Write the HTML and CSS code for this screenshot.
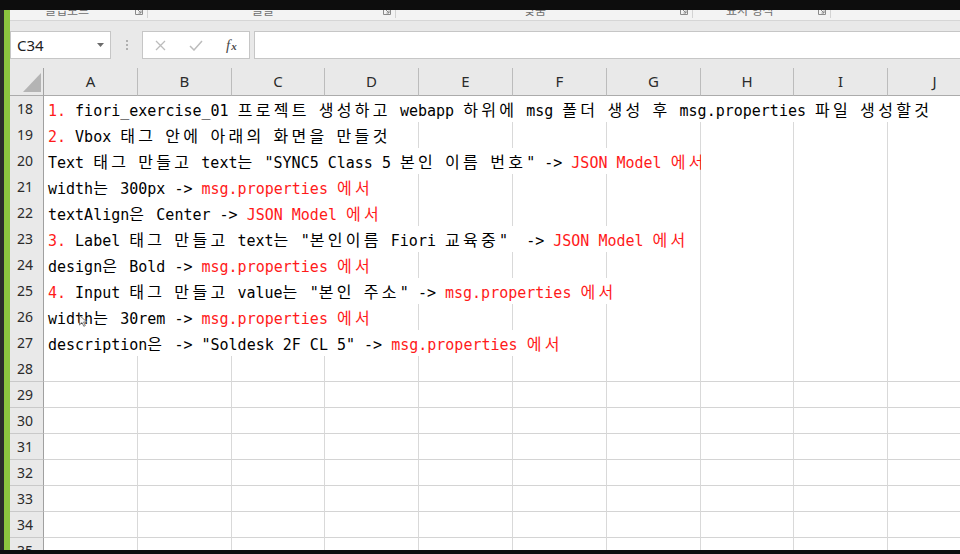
FILE: index.html
```html
<!DOCTYPE html>
<html lang="ko">
<head>
<meta charset="utf-8">
<title>Excel</title>
<link rel="stylesheet" href="styles.css">
</head>
<body>
<div class="screen">
  <div class="topbar"></div>
  <div class="main">
    <div class="edge"></div>
    <div class="accent"></div>
    <div class="app">
      <div class="ribbon">
        <div class="grp g1"><span class="glabel">클립보드</span><svg class="launch" viewBox="0 0 8 8"><path d="M0.5 0.5V7.5H7.5V0.5" fill="none" stroke="#8a8a8a"/><path d="M3 3L6 6M6 3.5V6H3.5" fill="none" stroke="#8a8a8a"/></svg></div>
        <div class="grp g2"><span class="glabel">글꼴</span><svg class="launch" viewBox="0 0 8 8"><path d="M0.5 0.5V7.5H7.5V0.5" fill="none" stroke="#8a8a8a"/><path d="M3 3L6 6M6 3.5V6H3.5" fill="none" stroke="#8a8a8a"/></svg></div>
        <div class="grp g3"><span class="glabel">맞춤</span><svg class="launch" viewBox="0 0 8 8"><path d="M0.5 0.5V7.5H7.5V0.5" fill="none" stroke="#8a8a8a"/><path d="M3 3L6 6M6 3.5V6H3.5" fill="none" stroke="#8a8a8a"/></svg></div>
        <div class="grp g4"><span class="glabel">표시 형식</span><svg class="launch" viewBox="0 0 8 8"><path d="M0.5 0.5V7.5H7.5V0.5" fill="none" stroke="#8a8a8a"/><path d="M3 3L6 6M6 3.5V6H3.5" fill="none" stroke="#8a8a8a"/></svg></div>
      </div>

      <div class="fbar">
        <div class="namebox"><span class="nbtext">C34</span><svg class="caret" viewBox="0 0 7 4"><path d="M0 0H7L3.5 4Z" fill="#6b6b6b"/></svg></div>
        <div class="dots"><i></i><i></i><i></i></div>
        <div class="fbtns">
          <span class="slot"><svg width="11" height="11" viewBox="0 0 11 11"><path d="M1 1L10 10M10 1L1 10" stroke="#bcbcbc" stroke-width="1.3" fill="none"/></svg></span>
          <span class="slot"><svg width="14" height="11" viewBox="0 0 14 11"><path d="M1 6L5 10L13 1" stroke="#bcbcbc" stroke-width="1.5" fill="none"/></svg></span>
          <span class="slot fx"><i>f</i><i class="fxx">x</i></span>
        </div>
        <div class="finput"></div>
      </div>

      <div class="sheet">
        <div class="row head">
          <div class="corner"><svg width="18" height="19" viewBox="0 0 18 19"><path d="M18 0V19H0Z" fill="#b4b4b4"/></svg></div>
          <div class="ch">A</div><div class="ch">B</div><div class="ch">C</div><div class="ch">D</div><div class="ch">E</div><div class="ch">F</div><div class="ch">G</div><div class="ch">H</div><div class="ch">I</div><div class="ch">J</div>
        </div>

        <div class="row"><div class="rh">18</div><div class="c t span10"><span class="r">1.</span> fiori_exercise_01 <span class="k">프로젝트</span> <span class="k">생성하고</span> webapp <span class="k">하위에</span> msg <span class="k">폴더</span> <span class="k">생성</span> <span class="k">후</span> msg.properties <span class="k">파일</span> <span class="k">생성할것</span></div></div>

        <div class="row"><div class="rh">19</div><div class="c t span4"><span class="r">2.</span> Vbox <span class="k">태그</span> <span class="k">안에</span> <span class="k">아래의</span> <span class="k">화면을</span> <span class="k">만들것</span></div><div class="c"></div><div class="c"></div><div class="c"></div><div class="c"></div><div class="c"></div><div class="c"></div></div>

        <div class="row"><div class="rh">20</div><div class="c t span7">Text <span class="k">태그</span> <span class="k">만들고</span> text<span class="k">는</span> "SYNC5 Class 5 <span class="k">본인</span> <span class="k">이름</span> <span class="k">번호</span>" -&gt; <span class="r">JSON Model <span class="k">에서</span></span></div><div class="c"></div><div class="c"></div><div class="c"></div></div>

        <div class="row"><div class="rh">21</div><div class="c t span4">width<span class="k">는</span> 300px -&gt; <span class="r">msg.properties <span class="k">에서</span></span></div><div class="c"></div><div class="c"></div><div class="c"></div><div class="c"></div><div class="c"></div><div class="c"></div></div>

        <div class="row"><div class="rh">22</div><div class="c t span4">textAlign<span class="k">은</span> Center -&gt; <span class="r">JSON Model <span class="k">에서</span></span></div><div class="c"></div><div class="c"></div><div class="c"></div><div class="c"></div><div class="c"></div><div class="c"></div></div>

        <div class="row"><div class="rh">23</div><div class="c t span7"><span class="r">3.</span> Label <span class="k">태그</span> <span class="k">만들고</span> text<span class="k">는</span> "<span class="k">본인이름</span> Fiori <span class="k">교육중</span>"  -&gt; <span class="r">JSON Model <span class="k">에서</span></span></div><div class="c"></div><div class="c"></div><div class="c"></div></div>

        <div class="row"><div class="rh">24</div><div class="c t span4">design<span class="k">은</span> Bold -&gt; <span class="r">msg.properties <span class="k">에서</span></span></div><div class="c"></div><div class="c"></div><div class="c"></div><div class="c"></div><div class="c"></div><div class="c"></div></div>

        <div class="row"><div class="rh">25</div><div class="c t span7"><span class="r">4.</span> Input <span class="k">태그</span> <span class="k">만들고</span> value<span class="k">는</span> "<span class="k">본인</span> <span class="k">주소</span>" -&gt; <span class="r">msg.properties <span class="k">에서</span></span></div><div class="c"></div><div class="c"></div><div class="c"></div></div>

        <div class="row"><div class="rh">26</div><div class="c t span4">width<span class="k">는</span> 30rem -&gt; <span class="r">msg.properties <span class="k">에서</span></span></div><div class="c"></div><div class="c"></div><div class="c"></div><div class="c"></div><div class="c"></div><div class="c"></div></div>

        <div class="row"><div class="rh">27</div><div class="c t span6">description<span class="k">은</span> -&gt; "Soldesk 2F CL 5" -&gt; <span class="r">msg.properties <span class="k">에서</span></span></div><div class="c"></div><div class="c"></div><div class="c"></div><div class="c"></div></div>

        <div class="row"><div class="rh">28</div><div class="c"></div><div class="c"></div><div class="c"></div><div class="c"></div><div class="c"></div><div class="c"></div><div class="c"></div><div class="c"></div><div class="c"></div><div class="c"></div></div>
        <div class="row"><div class="rh">29</div><div class="c"></div><div class="c"></div><div class="c"></div><div class="c"></div><div class="c"></div><div class="c"></div><div class="c"></div><div class="c"></div><div class="c"></div><div class="c"></div></div>
        <div class="row"><div class="rh">30</div><div class="c"></div><div class="c"></div><div class="c"></div><div class="c"></div><div class="c"></div><div class="c"></div><div class="c"></div><div class="c"></div><div class="c"></div><div class="c"></div></div>
        <div class="row"><div class="rh">31</div><div class="c"></div><div class="c"></div><div class="c"></div><div class="c"></div><div class="c"></div><div class="c"></div><div class="c"></div><div class="c"></div><div class="c"></div><div class="c"></div></div>
        <div class="row"><div class="rh">32</div><div class="c"></div><div class="c"></div><div class="c"></div><div class="c"></div><div class="c"></div><div class="c"></div><div class="c"></div><div class="c"></div><div class="c"></div><div class="c"></div></div>
        <div class="row"><div class="rh">33</div><div class="c"></div><div class="c"></div><div class="c"></div><div class="c"></div><div class="c"></div><div class="c"></div><div class="c"></div><div class="c"></div><div class="c"></div><div class="c"></div></div>
        <div class="row"><div class="rh">34</div><div class="c"></div><div class="c"></div><div class="c"></div><div class="c"></div><div class="c"></div><div class="c"></div><div class="c"></div><div class="c"></div><div class="c"></div><div class="c"></div></div>
        <div class="row"><div class="rh">35</div><div class="c"></div><div class="c"></div><div class="c"></div><div class="c"></div><div class="c"></div><div class="c"></div><div class="c"></div><div class="c"></div><div class="c"></div><div class="c"></div></div>
      </div>
    </div>
  </div>
  <div class="bottombar"></div>
  <svg class="cursor" width="9" height="12" viewBox="0 0 9 12"><path d="M0.5 0.5V10L3 7.6L4.8 11.3L6.3 10.6L4.6 7H8Z" fill="#f4f4f4" fill-opacity="0.85" stroke="#6d6d6d" stroke-width="0.9"/></svg>
</div>
</body>
</html>
```
FILE: styles.css
```css
html, body {
  margin: 0;
  padding: 0;
  background: #0d0d0d;
}

.screen {
  width: 960px;
  height: 554px;
  display: flex;
  flex-direction: column;
  overflow: hidden;
  position: relative;
}

.topbar {
  height: 10px;
  flex: none;
  background: #0d0d0d;
}

.bottombar {
  height: 4px;
  flex: none;
  background: #0d0d0d;
}

.main {
  flex: 1;
  display: flex;
  min-height: 0;
}

.edge {
  width: 4px;
  flex: none;
  background: #2b2b2b;
}

.accent {
  width: 6px;
  flex: none;
  background: #8cc43e;
}

.app {
  flex: 1;
  min-width: 0;
  display: flex;
  flex-direction: column;
  background: #e9e9e9;
  overflow: hidden;
}

/* ribbon group label strip */
.ribbon {
  height: 10px;
  flex: none;
  display: flex;
  background: #f3f3f3;
  border-bottom: 1px solid #d6d6d6;
  overflow: hidden;
}

.grp {
  height: 8px;
  flex: none;
  display: flex;
  justify-content: space-between;
  align-items: flex-start;
  border-right: 1px solid #d3d3d3;
  box-sizing: border-box;
}

.g1 { width: 138px; padding-left: 35px; }
.g2 { width: 248px; padding-left: 104px; }
.g3 { width: 297px; padding-left: 128px; }
.g4 { width: 138px; padding-left: 33px; }

.glabel {
  font: 12px/12px "Noto Sans CJK KR", sans-serif;
  color: #6f6f6f;
  margin-top: -6px;
  white-space: nowrap;
}

.launch {
  width: 8px;
  height: 8px;
  margin-top: -3px;
  margin-right: 4px;
}

/* formula bar */
.fbar {
  height: 28px;
  margin-top: 10px;
  flex: none;
  display: flex;
}

.namebox {
  width: 101px;
  flex: none;
  box-sizing: border-box;
  border: 1px solid #c6c6c6;
  background: #fff;
  display: flex;
  align-items: center;
  justify-content: space-between;
  padding: 0 6px 0 6px;
}

.nbtext {
  font: 15px "Noto Sans", sans-serif;
  color: #222;
}

.caret {
  width: 7px;
  height: 4px;
}

.dots {
  width: 31px;
  flex: none;
  display: flex;
  flex-direction: column;
  align-items: center;
  justify-content: center;
  gap: 2px;
}

.dots i {
  display: block;
  width: 2px;
  height: 2px;
  background: #b0b0b0;
}

.fbtns {
  width: 108px;
  flex: none;
  box-sizing: border-box;
  border: 1px solid #c6c6c6;
  background: #fff;
  display: flex;
  align-items: center;
}

.slot {
  width: 36px;
  display: flex;
  justify-content: center;
  align-items: center;
}

.fx {
  font-family: "Liberation Serif", serif;
  font-style: italic;
  color: #4a4a4a;
  font-size: 15px;
  line-height: 1;
}

.fx .fxx {
  font-size: 11px;
  margin-left: 1px;
  margin-top: 3px;
  font-weight: bold;
}

.finput {
  flex: 1;
  margin-left: 4px;
  box-sizing: border-box;
  border: 1px solid #c6c6c6;
  border-right: none;
  background: #fff;
}

/* sheet grid */
.sheet {
  margin-top: 9px;
  flex: 1;
  overflow: hidden;
}

.row {
  display: grid;
  grid-template-columns: 34px 94px 94px 93px 94px 94px 94px 94px 93px 94px 94px;
  height: 26px;
}

.row.head {
  height: 28px;
}

.corner {
  background: #e9e9e9;
  border-right: 1px solid #a3a3a3;
  border-bottom: 1px solid #ababab;
  box-sizing: border-box;
  display: flex;
  align-items: flex-end;
  justify-content: flex-end;
  padding: 0 2px 3px 0;
}

.ch {
  background: #e9e9e9;
  border-right: 1px solid #bcbcbc;
  border-bottom: 1px solid #ababab;
  box-sizing: border-box;
  font: 15px/27px "Noto Sans", sans-serif;
  color: #2b2b2b;
  text-align: center;
}

.rh {
  background: #e9e9e9;
  border-right: 1px solid #a0a0a0;
  border-bottom: 1px solid #c9c9c9;
  box-sizing: border-box;
  font: 14px/25px "Noto Sans", sans-serif;
  color: #2b2b2b;
  text-align: center;
  padding-right: 3px;
}

.c {
  background: #fff;
  border-right: 1px solid #d9d9d9;
  border-bottom: 1px solid #d4d4d4;
  box-sizing: border-box;
  min-width: 0;
}

.t {
  white-space: pre;
  overflow: visible;
  font: 15px/26px "DejaVu Sans Mono", monospace;
  color: #000;
  padding-left: 4px;
}

.span4 { grid-column: span 4; }
.span6 { grid-column: span 6; }
.span7 { grid-column: span 7; }
.span10 { grid-column: span 10; }

.k {
  font-family: "Noto Sans CJK KR", sans-serif;
  font-size: 16px;
  letter-spacing: 3.3px;
}

.r {
  color: #ff1a1a;
}

.cursor {
  position: absolute;
  left: 79px;
  top: 315px;
}
```
